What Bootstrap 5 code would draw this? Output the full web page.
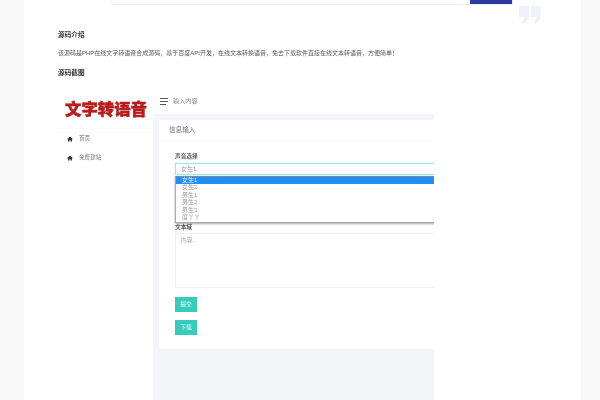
<!doctype html>
<html lang="zh">
<head>
<meta charset="utf-8">
<title>源码介绍</title>
<link rel="stylesheet" href="https://cdn.jsdelivr.net/npm/bootstrap@5.3.0/dist/css/bootstrap.min.css">
<style>
html,body{height:400px;overflow:hidden;background:#f8f8f8;}
body{font-family:"Liberation Sans","Noto Sans CJK SC",sans-serif;}
.sheet{margin-left:24px;width:557px;height:400px;background:#fff;overflow:hidden;}
.topstrip{height:6px;}
.searchbox{margin-left:86px;width:403px;height:5px;border:1px solid #eee;border-top:0;border-radius:0 0 0 16px;background:#fff;}
.searchbtn{width:42px;height:4px;background:#2b3a9f;}
.quoteicon{display:block;position:absolute;left:495px;top:6px;width:22px;height:18px;fill:#eef2fb;}
.article{padding:24px 0 0 34px;}
.subhead{font-size:6.67px;line-height:10px;font-weight:700;color:#333;margin:0;filter:blur(.2px);}
.intro{font-size:6px;line-height:10px;color:#555;margin:8px 0 10px;white-space:nowrap;filter:blur(.2px);}
.shot{margin-top:10px;width:376px;height:330px;overflow:hidden;filter:blur(.3px);}
.shotside{width:95px;flex:none;background:#fff;}
.logoarea{height:41px;border-bottom:1px solid #fafafa;padding:11px 0 0 7px;}
.logotext{font-size:16.4px;line-height:20px;font-weight:900;color:#b71c1c;-webkit-text-stroke:.5px #b71c1c;white-space:nowrap;}
.sideitem{height:19px;padding-left:9px;font-size:5.6px;color:#777;gap:6px;}
.sideitem svg{width:6px;height:6px;fill:#333;flex:none;}
.shotmain{width:281px;flex:none;background:#f4f5f9;}
.shotbar{height:26px;background:#fff;padding-left:7px;gap:5px;font-size:6.2px;color:#888;}
.burger{width:8px;flex:none;}
.burger i{display:block;height:1px;background:#555;margin:2px 0 0;}
.burger i:first-child{margin-top:0;}
.burger i:last-child{width:6px;}
.formcard{margin:6px 0 0 6px;width:290px;height:229px;border:0;border-radius:0;background:#fff;}
.formhead{height:21px;padding:0 0 0 10px;font-size:6.6px;color:#777;background:#fff;border-bottom:1px solid #f8f8f8;border-radius:0!important;}
.formbody{padding:11px 0 0 16px;position:relative;}
.fieldlabel{display:block;margin:0;font-size:5.7px;line-height:8px;font-weight:700;color:#555;}
.pick{margin-top:3px;height:12px;width:100%;border:1px solid #a5e5dc;border-radius:0;padding:0 0 0 5px;font-size:6px;line-height:10px;color:#999;box-shadow:0 0 1px #a5e5dc;display:flex;align-items:center;}
.picklist{position:absolute;left:16px;top:35px;right:0;width:auto;height:46.5px;border:1px solid #aaa;border-top-color:#888;border-radius:0;box-shadow:0 1px 2px rgba(0,0,0,.35);background:#fff;z-index:2;}
.picklist .list-group-item{padding:0 0 0 6px;border:0;border-radius:0;font-size:6px;line-height:7.4px;height:7.4px;color:#999;background:#fff;}
.picklist .list-group-item.active{background:#1e90ff;color:#e8f4ff;}
.label2{margin-top:48px;}
.areabox{display:block;margin-top:2px;width:100%;height:55px;min-height:0;border:1px solid #f0f0f0;border-radius:0;padding:2px 5px;font-size:5.7px;line-height:8px;color:#999;resize:none;}
.areabox::placeholder{color:#aaa;}
.tealbtn{display:block;width:22px;height:15px;padding:0;border:0;border-radius:0;background:#36cbbb;color:#eafffb;font-size:5.8px;line-height:15px;}
.tealbtn.first{margin-top:9px;}
.tealbtn.second{margin-top:8px;}
</style>
</head>
<body>
<div class="sheet position-relative">
  <div class="topstrip">
    <div class="searchbox d-flex justify-content-end"><div class="searchbtn"></div></div>
  </div>
  <svg class="quoteicon" viewBox="0 0 22 18" aria-hidden="true"><path d="M0 0h10v9c0 4-2 7-6 9l-2-2c2-1 3-3 3-5H0zM12 0h10v9c0 4-2 7-6 9l-2-2c2-1 3-3 3-5h-5z"/></svg>
  <div class="article">
    <h2 class="subhead">源码介绍</h2>
    <p class="intro">该源码是PHP在线文字转语音合成源码&#xFF0C;基于百度API开发&#xFF0C;在线文本转换语音&#xFF0C;免去下载软件直接在线文本转语音&#xFF0C;方便简单&#xFF01;</p>
    <h2 class="subhead">源码截图</h2>
    <div class="shot d-flex">
      <aside class="shotside">
        <div class="logoarea"><div class="logotext">文字转语音</div></div>
        <div class="sideitem d-flex align-items-center"><svg viewBox="0 0 12 12"><path d="M6 1 0 6.5h2V11h3V8h2v3h3V6.5h2z"/></svg><span>首页</span></div>
        <div class="sideitem d-flex align-items-center"><svg viewBox="0 0 12 12"><path d="M6 1 0 6.5h2V11h3V8h2v3h3V6.5h2z"/></svg><span>免费建站</span></div>
      </aside>
      <main class="shotmain">
        <div class="shotbar d-flex align-items-center"><div class="burger"><i></i><i></i><i></i></div><span>输入内容</span></div>
        <div class="card formcard">
          <div class="card-header formhead d-flex align-items-center">信息输入</div>
          <div class="formbody">
            <label class="fieldlabel">声音选择</label>
            <div class="pick">女生1</div>
            <ul class="list-group picklist">
              <li class="list-group-item active">女生1</li>
              <li class="list-group-item">女生2</li>
              <li class="list-group-item">男生1</li>
              <li class="list-group-item">男生2</li>
              <li class="list-group-item">男生3</li>
              <li class="list-group-item">度丫丫</li>
            </ul>
            <label class="fieldlabel label2">文本域</label>
            <textarea class="form-control areabox" placeholder="内容.."></textarea>
            <button type="button" class="btn tealbtn first">提交</button>
            <button type="button" class="btn tealbtn second">下载</button>
          </div>
        </div>
      </main>
    </div>
  </div>
</div>
<script src="https://cdn.jsdelivr.net/npm/bootstrap@5.3.0/dist/js/bootstrap.bundle.min.js"></script>
</body>
</html>
